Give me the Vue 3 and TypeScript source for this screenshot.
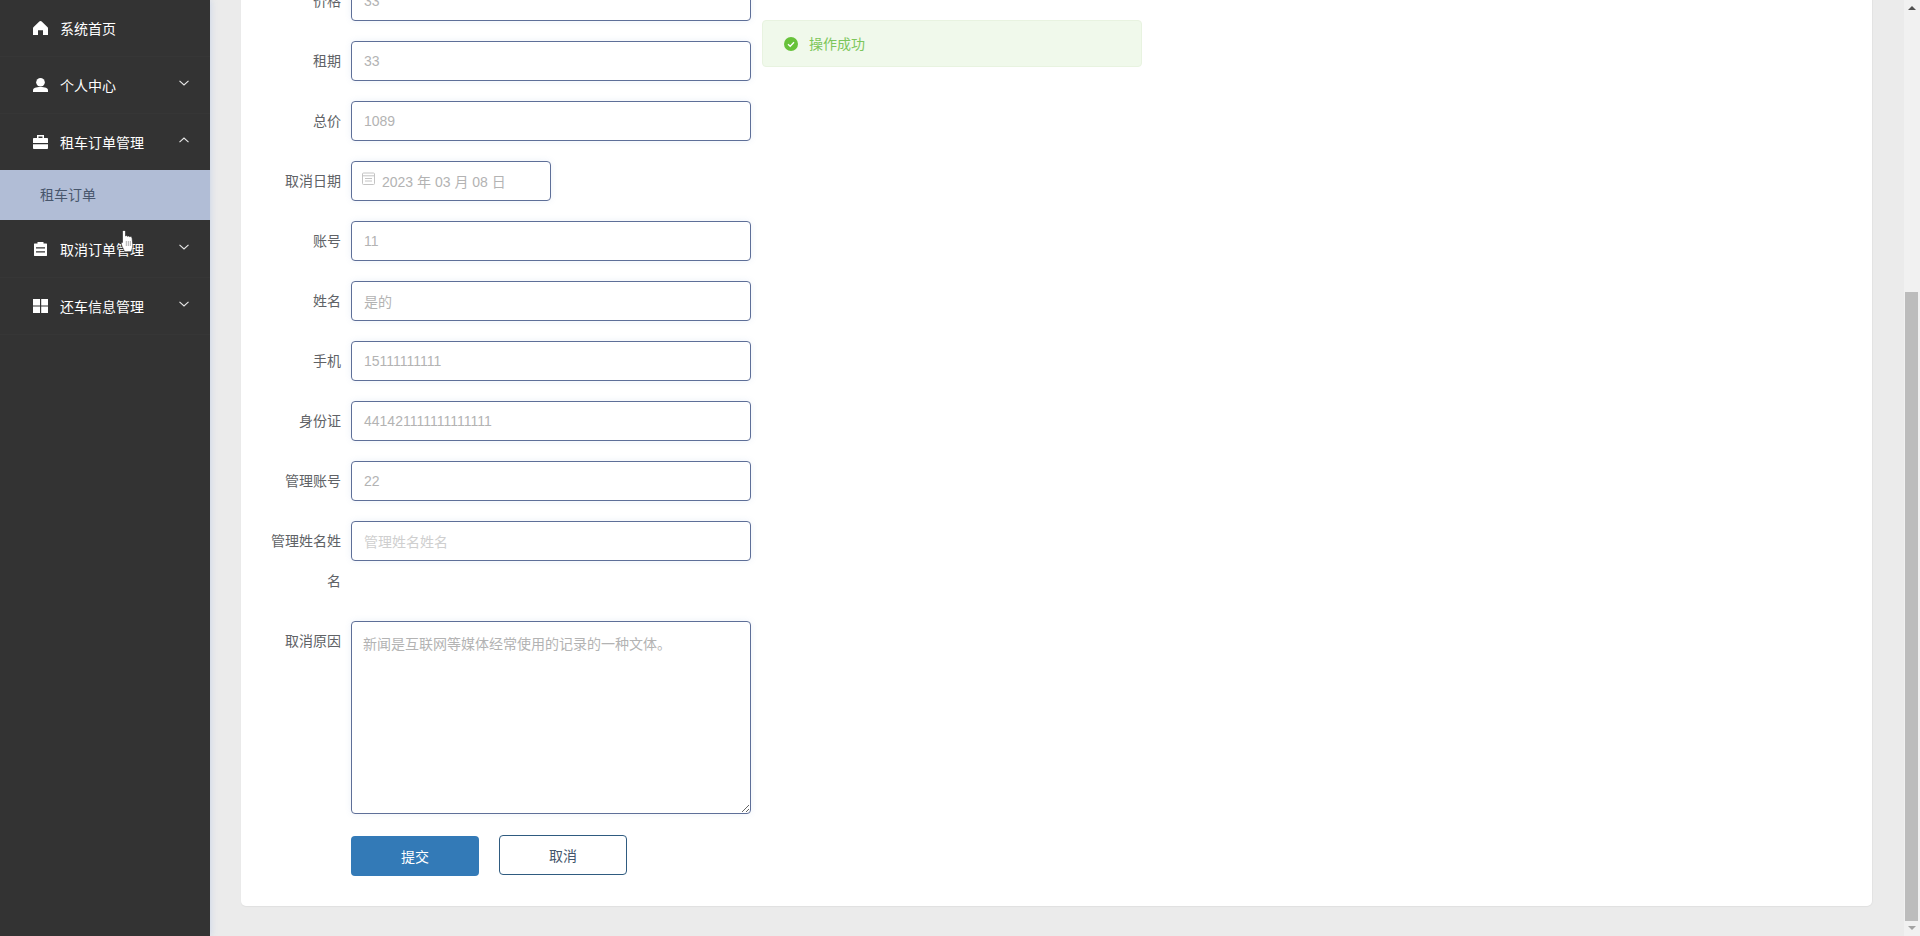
<script setup lang="ts">
interface Field {
  label: string
  value: string
  kind?: 'date' | 'area' | 'faint'
}

const fields: Field[] = [
  { label: '价格', value: '33' },
  { label: '租期', value: '33' },
  { label: '总价', value: '1089' },
  { label: '取消日期', value: '2023 年 03 月 08 日', kind: 'date' },
  { label: '账号', value: '11' },
  { label: '姓名', value: '是的' },
  { label: '手机', value: '15111111111' },
  { label: '身份证', value: '441421111111111111' },
  { label: '管理账号', value: '22' },
  { label: '管理姓名姓名', value: '管理姓名姓名', kind: 'faint' },
  { label: '取消原因', value: '新闻是互联网等媒体经常使用的记录的一种文体。', kind: 'area' },
]

const menu = [
  { key: 'home', label: '系统首页', arrow: '' },
  { key: 'user', label: '个人中心', arrow: 'down' },
  { key: 'case', label: '租车订单管理', arrow: 'up', children: ['租车订单'] },
  { key: 'clip', label: '取消订单管理', arrow: 'down' },
  { key: 'grid', label: '还车信息管理', arrow: 'down' },
]
</script>

<template>
  <div class="page">
    <aside class="sidebar">
      <template v-for="item in menu" :key="item.key">
        <div class="menu-item" :class="{ 'menu-item--open': item.children }">
          <svg class="menu-icon" viewBox="0 0 15 14" fill="#fff">
            <path v-if="item.key === 'home'" d="M7.5 0C8 0 8.400.2 8.700.5l5.900 5.800c.3.3.4.7.4 1.100V14h-5V9.300H5V14H0V7.400c0-.4.1-.8.4-1.100L6.300.5C6.600.2 7 0 7.500 0z" />
            <template v-else-if="item.key === 'user'">
              <circle cx="7.5" cy="4.300" r="4.300" />
              <path d="M0 14v-1.800C0 10.200 3 9 7.500 9s7.500 1.200 7.500 3.200V14z" />
            </template>
            <path v-else-if="item.key === 'case'" fill-rule="evenodd" d="M4 0h7v3h3.200c.5 0 .8.300.8.800V8H0V3.800C0 3.300.3 3 .8 3H4zm1.500 1.400V3h4V1.400zM0 9.300h15v3.900c0 .5-.3.8-.8.8H.8c-.5 0-.8-.3-.8-.8z" />
            <path v-else-if="item.key === 'clip'" fill-rule="evenodd" d="M4.500 0h6v1.400h3c.3 0 .5.200.5.500v11.600c0 .3-.2.500-.5.500h-12c-.3 0-.5-.2-.5-.5V1.900c0-.3.2-.5.5-.5h3zM3 5.300v1.200h9V5.300zm0 3.900v1.200h9V9.200z" />
            <path v-else d="M0 0h7v6.400H0zM8.200 0H15v6.400H8.200zM0 7.600h7V14H0zM8.200 7.600H15V14H8.200z" />
          </svg>
          <span class="menu-label">{{ item.label }}</span>
          <svg v-if="item.arrow" class="menu-arrow" viewBox="0 0 10 6" fill="none" stroke="#e8e8e8" stroke-width="1.100">
            <path :d="item.arrow === 'down' ? 'M.5.800 5 5 9.500.800' : 'M.5 5.200 5 1l4.500 4.200'" />
          </svg>
        </div>
        <div v-for="child in item.children" :key="child" class="submenu-item">{{ child }}</div>
      </template>
    </aside>

    <main class="main">
      <section class="card">
        <div
          v-for="field in fields"
          :key="field.label"
          class="row"
        >
          <div class="label">{{ field.label }}</div>
          <div
            class="control"
            :class="{
              'control--date': field.kind === 'date',
              'control--area': field.kind === 'area',
              'control--faint': field.kind === 'faint',
            }"
          >
            <svg v-if="field.kind === 'date'" class="date-icon" viewBox="0 0 13 13" fill="none" stroke="#c4c4c4">
              <rect x=".5" y="1" width="12" height="11.500" rx="1" />
              <path d="M.5 3.800h12M3 6.500h7M3 9h7" />
            </svg>
            <span>{{ field.value }}</span>
          </div>
        </div>
        <div class="actions">
          <button class="btn btn--primary" type="button">提交</button>
          <button class="btn btn--ghost" type="button">取消</button>
        </div>
      </section>
    </main>

    <div class="scrollbar">
      <span class="scroll-arrow scroll-arrow--up"></span>
      <div class="scroll-track"><div class="scroll-thumb"></div></div>
      <span class="scroll-arrow scroll-arrow--down"></span>
    </div>

    <div class="toast">
      <svg class="toast-icon" viewBox="0 0 14 14">
        <circle cx="7" cy="7" r="7" fill="#67c23a" />
        <path d="M4 7.200 6.200 9.300 10 5.200" fill="none" stroke="#fff" stroke-width="1.300" />
      </svg>
      <span class="toast-text">操作成功</span>
    </div>

    <svg class="cursor" viewBox="0 0 12 22">
      <path d="M1.500 1.500C1.500 0 4.500 0 4.500 1.500V6C5 5.400 6.300 5.400 6.600 6.400 7.100 5.700 8.400 5.800 8.700 6.800 9.300 6.300 10.900 6.500 11.100 8L11.800 14.500C11.800 17.500 10.800 19.800 10.300 21.700H3.500C3 19.500 .8 17 .3 13.800 .1 12.500 1 11.800 1.500 12.500z" fill="#fff" stroke="#222" stroke-width=".6" />
      <path d="M5.300 11V16M7.300 11V16M9.300 11V16" stroke="#777" stroke-width=".6" fill="none" />
    </svg>
  </div>
</template>

<style>
html,
body {
  margin: 0;
  overflow: hidden;
}
</style>

<style scoped>
.page {
  position: relative;
  display: flex;
  height: 936px;
  overflow: hidden;
  background: #ebebeb;
  font-family: "Liberation Sans", "Noto Sans CJK SC", sans-serif;
  font-size: 14px;
}

.sidebar {
  flex: 0 0 210px;
  background: #333;
  box-shadow: 0 0 7px rgba(110, 150, 230, 0.3);
  z-index: 1;
}

.menu-item {
  box-sizing: border-box;
  display: flex;
  align-items: center;
  height: 57px;
  padding: 0 21px 0 33px;
  border-bottom: 1px solid #363636;
  color: #fff;
}

.menu-item--open {
  height: 56px;
  border-bottom: 0;
}

.menu-icon {
  flex: 0 0 15px;
  width: 15px;
  height: 14px;
  margin-right: 12px;
}

.menu-label {
  flex: 1;
}

.menu-arrow {
  width: 10px;
  height: 6px;
  margin-bottom: 5px;
}

.submenu-item {
  box-sizing: border-box;
  display: flex;
  align-items: center;
  height: 50px;
  margin-bottom: 1px;
  padding: 0 0 3px 40px;
  background: #b1bdd6;
  color: #48566c;
}

.main {
  flex: 1;
  display: flex;
  flex-direction: column;
  justify-content: flex-end;
  min-width: 0;
  padding: 0 32px 30px 31px;
  overflow: hidden;
}

.card {
  flex: none;
  display: flex;
  flex-direction: column;
  gap: 20px;
  padding: 0 20px 30px;
  background: #fff;
  border-radius: 5px;
  box-shadow: 0 1px 1px #e0e0e0, 1px 0 1px #e4e4e4;
}

.row {
  display: flex;
  align-items: flex-start;
}

.label {
  flex: 0 0 90px;
  box-sizing: border-box;
  padding-right: 10px;
  line-height: 40px;
  text-align: right;
  color: #606266;
}

.control {
  box-sizing: border-box;
  display: flex;
  align-items: center;
  width: 400px;
  height: 40px;
  padding: 0 12px;
  background: #fff;
  border: 1px solid #5e6f98;
  border-radius: 4px;
  box-shadow: 0 0 6px rgba(100, 130, 200, 0.12);
  color: #b3b3b3;
}

.control--date {
  width: 200px;
}

.control--faint {
  color: #cfcfcf;
}

.control--faint span {
  margin-top: -1px;
}

.control--area {
  display: block;
  height: 193px;
  padding: 12px 11px;
  line-height: 20px;
  overflow: auto;
  resize: vertical;
}

.date-icon {
  width: 13px;
  height: 13px;
  margin: -6px 7px 0 -2px;
  flex: none;
}

.actions {
  display: flex;
  align-items: flex-start;
  gap: 20px;
  margin: 1px 0 0 90px;
}

.btn {
  box-sizing: border-box;
  width: 128px;
  height: 40px;
  padding: 0;
  border-radius: 4px;
  font: inherit;
}

.btn--primary {
  margin-top: 1px;
  border: 0;
  background: #337ab7;
  color: #fff;
}

.btn--ghost {
  border: 1px solid #2f5b80;
  background: #fff;
  color: #43566c;
}

.scrollbar {
  flex: 0 0 16px;
  display: flex;
  flex-direction: column;
  align-items: center;
  background: #f1f1f1;
}

.scroll-arrow {
  flex: none;
  width: 0;
  height: 0;
  border-left: 4px solid transparent;
  border-right: 4px solid transparent;
}

.scroll-arrow--up {
  margin: 6px 0 5px;
  border-bottom: 4px solid #505050;
}

.scroll-arrow--down {
  margin: 5px 0 6px;
  border-top: 4px solid #a3a3a3;
}

.scroll-track {
  flex: 1;
  align-self: stretch;
  display: flex;
  flex-direction: column;
  justify-content: flex-end;
  padding: 0 2px 0 1px;
}

.scroll-thumb {
  height: 629px;
  background: #bcbcbc;
}

.toast {
  position: absolute;
  left: 762px;
  top: 20px;
  box-sizing: border-box;
  display: flex;
  align-items: center;
  width: 380px;
  height: 47px;
  padding-left: 21px;
  background: #f0f9eb;
  border: 1px solid #e8f3e0;
  border-radius: 4px;
  color: #7cc65a;
  z-index: 2;
}

.toast-icon {
  width: 14px;
  height: 14px;
  margin-right: 11px;
}

.toast-text {
  margin-top: -1px;
}

.cursor {
  position: absolute;
  left: 121px;
  top: 230px;
  width: 12px;
  height: 22px;
  z-index: 3;
}
</style>
